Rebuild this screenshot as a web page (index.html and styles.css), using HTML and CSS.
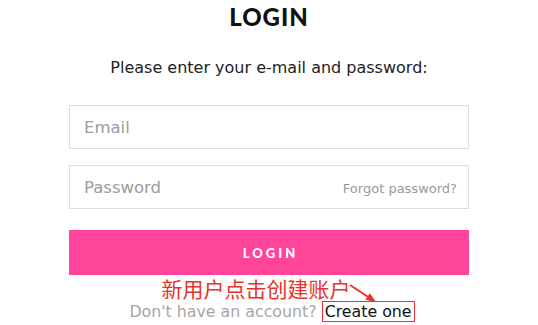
FILE: index.html
```html
<!DOCTYPE html>
<html lang="en">
<head>
  <meta charset="UTF-8" />
  <meta name="viewport" content="width=device-width, initial-scale=1.0" />
  <title>Login</title>
  <link rel="stylesheet" href="styles.css">
</head>
<body>
  <div class="login-box">
    <h1 class="login-title">LOGIN</h1>
    <p class="login-hint">Please enter your e-mail and password:</p>

    <div class="field">
      <span class="placeholder">Email</span>
    </div>
    <div class="field">
      <span class="placeholder">Password</span>
      <a class="forgot" href="#">Forgot password?</a>
    </div>

    <button class="login-button">LOGIN</button>

    <div class="note">新用户点击创建账户</div>
    <svg class="note-arrow" width="32" height="24" viewBox="0 0 32 24">
      <line x1="2" y1="2" x2="21" y2="14.5" stroke="#e8322b" stroke-width="2" />
      <polygon points="28,19 17.4,16.8 21.8,10.2" fill="#e8322b" />
    </svg>

    <p class="signup">Don't have an account? <a class="create" href="#">Create one</a></p>
  </div>
</body>
</html>
```

FILE: styles.css
```css
* {
  margin: 0;
  padding: 0;
  box-sizing: border-box;
}

body {
  font-family: 'DejaVu Sans', 'Noto Sans', sans-serif;
  background: #fff;
  color: #222;
}

.login-box {
  position: relative;
  width: 400px;
  margin: 0 auto;
  display: flex;
  flex-direction: column;
  align-items: stretch;
  text-align: center;
  padding-top: 3px;
}

.login-title {
  font-family: 'Lato', 'DejaVu Sans', sans-serif;
  font-size: 24px;
  font-weight: 900;
  letter-spacing: 1px;
  color: #111;
  line-height: 28px;
}

.login-hint {
  margin-top: 27px;
  font-size: 16px;
  line-height: 20px;
  color: #222;
  white-space: nowrap;
  margin-left: -20px;
  margin-right: -20px;
}

.field {
  margin-top: 27px;
  height: 44px;
  border: 1px solid #ddd;
  display: flex;
  justify-content: space-between;
  align-items: center;
  padding: 0 11px 0 14px;
}

.field + .field {
  margin-top: 16px;
}

.placeholder {
  font-size: 16.5px;
  color: #9c9c9c;
}

.forgot {
  font-size: 13px;
  color: #999;
  text-decoration: none;
  padding-top: 3px;
}

.login-button {
  margin-top: 21px;
  height: 45px;
  border: none;
  background: #ff4599;
  color: #fff;
  font-family: 'Lato', 'DejaVu Sans', sans-serif;
  font-weight: 900;
  font-size: 13px;
  letter-spacing: 3px;
  padding-left: 3px;
}

.note {
  font-family: 'Noto Sans CJK SC', sans-serif;
  color: #e8322b;
  font-size: 21px;
  line-height: 24px;
  margin-top: 1px;
  margin-right: 26px;
}

.note-arrow {
  position: absolute;
  left: 279px;
  top: 283px;
}

.signup {
  margin-top: 2px;
  font-size: 15.8px;
  line-height: 20px;
  color: #a6a6a6;
  margin-right: -6px;
}

.create {
  color: #111;
  text-decoration: none;
  border: 1px solid #e8322b;
  padding: 0 2px;
}
```
